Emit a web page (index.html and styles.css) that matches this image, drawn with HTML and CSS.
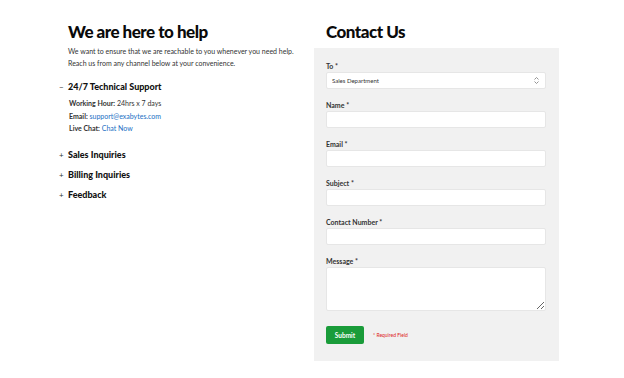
FILE: index.html
```html
<!DOCTYPE html>
<html lang="en">
<head>
  <meta charset="UTF-8" />
  <title>Contact Us</title>
  <link rel="stylesheet" href="styles.css">
</head>
<body>
  <div class="page">
    <!-- Help channels -->
    <div class="help">
      <h1>We are here to help</h1>
      <p class="intro">We want to ensure that we are reachable to you whenever you need help. Reach us from any channel below at your convenience.</p>

      <div class="channel open">
        <h3><span class="toggle">&minus;</span>24/7 Technical Support</h3>
        <div class="channel-body">
          <div><b>Working Hour:</b> 24hrs x 7 days</div>
          <div><b>Email:</b> <a href="#">support@exabytes.com</a></div>
          <div><b>Live Chat:</b> <a href="#">Chat Now</a></div>
        </div>
      </div>
      <div class="channel">
        <h3><span class="toggle">+</span>Sales Inquiries</h3>
      </div>
      <div class="channel">
        <h3><span class="toggle">+</span>Billing Inquiries</h3>
      </div>
      <div class="channel">
        <h3><span class="toggle">+</span>Feedback</h3>
      </div>
    </div>

    <!-- Contact form -->
    <div class="contact">
      <h1>Contact Us</h1>
      <form class="form-box">
        <label>To <span>*</span></label>
        <div class="select">
          <select>
            <option>Sales Department</option>
          </select>
          <svg class="arrows" width="5" height="7" viewBox="0 0 5 7"><path d="M0.5 2.5L2.5 0.5L4.5 2.5M0.5 4.5L2.5 6.5L4.5 4.5" fill="none" stroke="#888" stroke-width="0.9"/></svg>
        </div>

        <label>Name <span>*</span></label>
        <input type="text">

        <label>Email <span>*</span></label>
        <input type="text">

        <label>Subject <span>*</span></label>
        <input type="text">

        <label>Contact Number <span>*</span></label>
        <input type="text">

        <label>Message <span>*</span></label>
        <textarea></textarea>

        <div class="actions">
          <button type="button" class="btn">Submit</button>
          <small class="required">* Required Field</small>
        </div>
      </form>
    </div>
  </div>
</body>
</html>
```

FILE: styles.css
```css
body {
  margin: 0;
  font-family: Lato, 'Open Sans', sans-serif;
  color: #222;
  background: #fff;
}

.page {
  display: grid;
  grid-template-columns: 246px 245px;
  padding: 20px 0 0 68px;
}

h1 {
  margin: 0;
  font-size: 17px;
  font-weight: 900;
  letter-spacing: -0.5px;
  line-height: 24px;
  color: #0a0a0a;
}

.intro {
  max-width: 226px;
  margin: 1px 0 8px;
  font-size: 7px;
  line-height: 12px;
  color: #333;
}

.channel h3 {
  position: relative;
  margin: 0;
  font-size: 9px;
  font-weight: 900;
  line-height: 20px;
  color: #111;
}

.toggle {
  position: absolute;
  left: -9px;
  font-size: 8px;
  font-weight: 400;
  color: #333;
}

.channel-body {
  padding: 0 0 10px 1px;
  font-size: 7px;
  line-height: 12.5px;
  color: #333;
}

.channel-body b {
  font-weight: 700;
}

.channel-body a {
  color: #1a6fc4;
  text-decoration: none;
}

.contact h1 {
  padding-left: 12px;
  margin-bottom: 4px;
}

.form-box {
  background: #f1f1f1;
  padding: 13px 13px 17px 12px;
}

.form-box label {
  display: block;
  font-size: 7px;
  font-weight: 700;
  color: #333;
  line-height: 10px;
  margin-bottom: 1px;
}

.form-box input,
.form-box select,
.form-box textarea {
  display: block;
  box-sizing: border-box;
  width: 100%;
  height: 17px;
  border: 1px solid #e6e6e6;
  border-radius: 2px;
  background: #fff;
  margin: 0 0 11px;
  font-family: inherit;
  font-size: 6px;
  color: #333;
}

.form-box label + input,
.form-box label + textarea {
  margin-top: 1px;
}

.select {
  position: relative;
}

.form-box select {
  appearance: none;
  padding: 0 5px;
  margin-bottom: 11px;
}

.arrows {
  position: absolute;
  right: 7px;
  top: 5px;
}

.form-box textarea {
  height: 44px;
  resize: vertical;
  margin-bottom: 15px;
}

.actions {
  display: flex;
  align-items: center;
  gap: 9px;
}

.btn {
  background: #1a9c3a;
  color: #fff;
  border: none;
  border-radius: 2px;
  font-family: inherit;
  font-size: 6.5px;
  font-weight: 700;
  width: 38px;
  height: 18px;
  padding: 0;
}

.required {
  color: #d22;
  font-size: 5px;
}
```
